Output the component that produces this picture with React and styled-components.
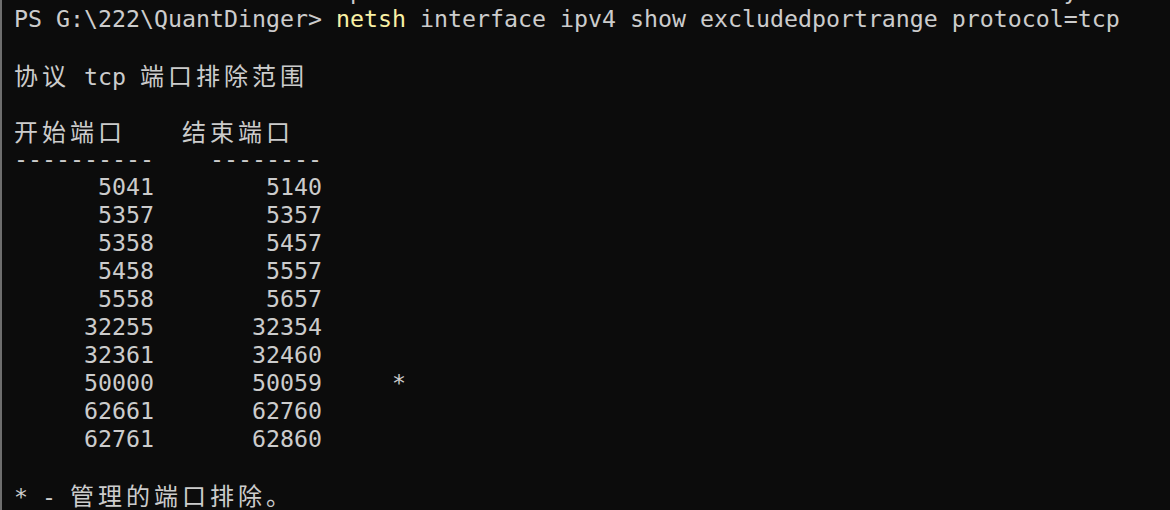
import styled, { createGlobalStyle } from "styled-components";

const GlobalStyle = createGlobalStyle`
  html, body {
    margin: 0;
    padding: 0;
    background: #0c0c0c;
    height: 100%;
    overflow: hidden;
  }
`;

const ranges = [
  [5041, 5140],
  [5357, 5357],
  [5358, 5457],
  [5458, 5557],
  [5558, 5657],
  [32255, 32354],
  [32361, 32460],
  [50000, 50059, true],
  [62661, 62760],
  [62761, 62860],
];

function Terminal() {
  return (
    <Screen>
      <Buffer>
        <Line>{" ".repeat(24) + "p" + " ".repeat(50) + "y"}</Line>
        <Line>
          {"PS G:\\222\\QuantDinger> "}
          <Command>netsh</Command>
          {" interface ipv4 show excludedportrange protocol=tcp"}
        </Line>
        <Line />
        <Line>
          <Cjk>协议</Cjk>
          {" tcp "}
          <Cjk>端口排除范围</Cjk>
        </Line>
        <Line />
        <Line>
          <Cjk>开始端口</Cjk>
          {"    "}
          <Cjk>结束端口</Cjk>
        </Line>
        <Line>{"----------    --------"}</Line>
        {ranges.map(([start, end, managed]) => (
          <Line key={start}>
            {String(start).padStart(10) +
              "    " +
              String(end).padStart(8) +
              (managed ? "     *" : "")}
          </Line>
        ))}
        <Line />
        <Line>
          {"* - "}
          <Cjk>管理的端口排除。</Cjk>
        </Line>
      </Buffer>
    </Screen>
  );
}

export default function App() {
  return (
    <>
      <GlobalStyle />
      <Terminal />
    </>
  );
}

const Screen = styled.div`
  width: 1170px;
  height: 510px;
  box-sizing: border-box;
  border-left: 2px solid #6e6e6e;
  background: #0c0c0c;
  overflow: hidden;
`;

const Buffer = styled.div`
  margin-top: -23px;
  padding-left: 12px;
  display: flex;
  flex-direction: column;
`;

const Line = styled.div`
  height: 28px;
  line-height: 28px;
  white-space: pre;
  color: #cccccc;
  font-family: "DejaVu Sans Mono", "Liberation Mono", monospace;
  font-size: 23.25px;
`;

const Command = styled.span`
  color: #f9f1a5;
`;

const Cjk = styled.span`
  font-family: "Noto Sans CJK SC", sans-serif;
  font-size: 24px;
  letter-spacing: 4px;
`;
